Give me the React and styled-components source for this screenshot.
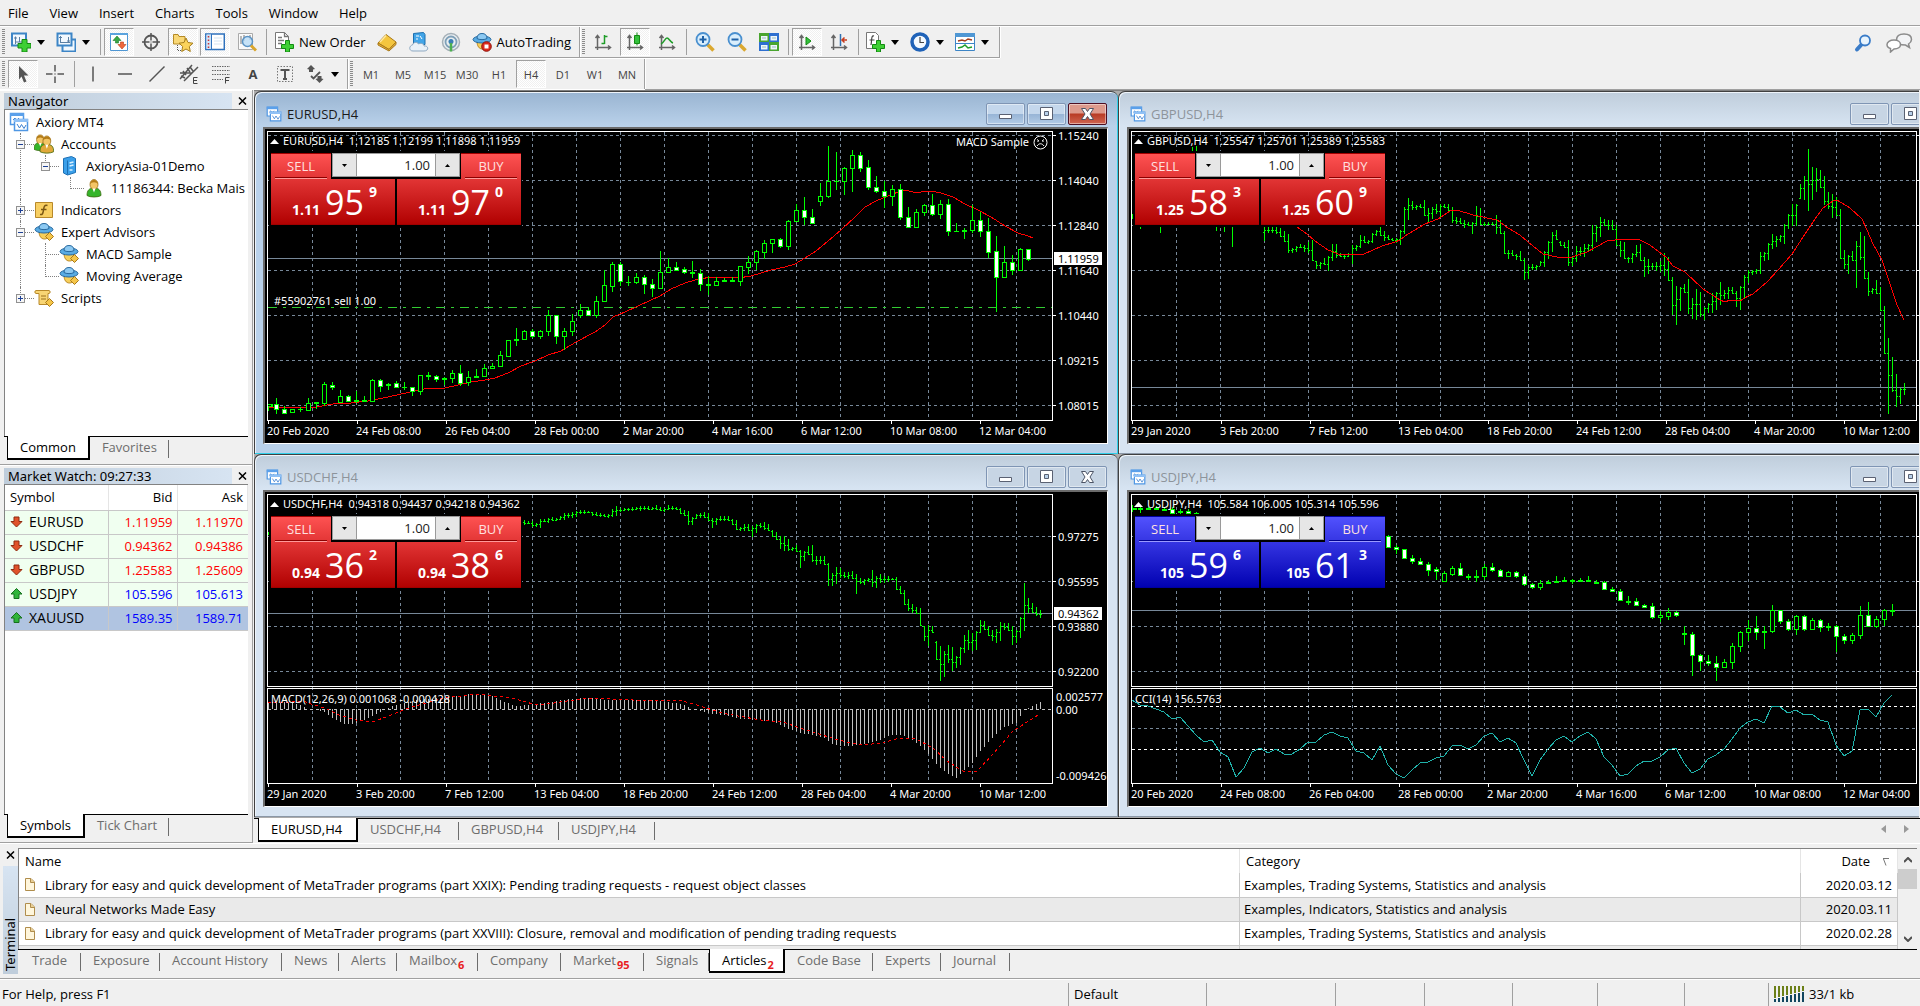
import React, { useState } from 'react'
import styled, { createGlobalStyle } from 'styled-components'

const UI_FONT = '"Open Sans", "Noto Sans", sans-serif'
const CHART_FONT = '"Noto Sans", "Open Sans", sans-serif'

const GlobalStyle = createGlobalStyle`
* { box-sizing: border-box; }
body {
  margin: 0;
  background: #f0f0f0;
  color: #000;
  font-family: ${UI_FONT};
  font-size: 13px;
  overflow: hidden;
}
button, input {
  font: inherit;
  color: inherit;
  padding: 0;
  margin: 0;
  border: 0;
  border-radius: 0;
  background: none;
}
ul { list-style: none; margin: 0; padding: 0; }
svg { display: block; flex: none; }
`

/* ---------- page ---------- */

const Terminal = styled.div`
  display: flex;
  flex-direction: column;
  width: 100%;
  height: 100vh;
`
const MenuBar = styled.nav`
  display: flex;
  height: 27px;
  padding: 0 0 2px 8px;
  gap: 21px;
  align-items: center;
  background: linear-gradient(#f0f0f0 25px, #a0a0a0 25px, #a0a0a0 26px, #fff 26px);
`
const ToolRow = styled.div`
  display: flex;
  height: ${(props) => (props.$last ? '31px' : '32px')};
  border-bottom: ${(props) => (props.$last ? '1px solid #a0a0a0' : '0')};
`
const ToolBar = styled.div`
  display: flex;
  align-items: center;
  height: ${(props) => (props.$flat ? '30px' : '31px')};
  padding-right: ${(props) => (props.$flat ? '0' : '2px')};
  border-right: 1px solid #a0a0a0;
  border-bottom: ${(props) => (props.$flat ? '0' : '1px solid #a0a0a0')};
  box-shadow: 1px 0 0 #fff, 0 1px 0 #fff;
`
const Grip = styled.span`
  width: 3px;
  height: 26px;
  margin: 0 3px 0 2px;
  background: repeating-linear-gradient(#8c8c8c 0 1px, #f0f0f0 1px 2px);
`
const Divider = styled.span`
  width: 1px;
  height: 26px;
  margin: 0 3px 0 2px;
  background: #a0a0a0;
`
const hatch = 'repeating-conic-gradient(#fff 0 25%, #f0f0f0 0 50%) 0 0 / 2px 2px'
const ToolButton = styled.button`
  display: flex;
  align-items: center;
  justify-content: ${(props) => (props.$wide ? 'flex-start' : 'center')};
  gap: ${(props) => (props.$wide ? '6px' : '5px')};
  width: ${(props) => (props.$text ? 'auto' : props.$wide ? '45px' : '30px')};
  height: 28px;
  padding: ${(props) => (props.$wide ? '0 0 0 2px' : props.$text ? '0 3px' : '0')};
  margin-right: ${(props) => (props.$wide ? '0' : '2px')};
  border: 1px solid transparent;
  border-color: ${(props) => (props.$on ? '#a0a0a0 #fff #fff #a0a0a0' : 'transparent')};
  background: ${(props) => (props.$on ? hatch : 'none')};
  font-size: ${(props) => (props.$period ? '11px' : '13px')};
  color: ${(props) => (props.$period ? '#444' : '#000')};
  white-space: nowrap;
  & > b { font-size: 13px; }
`
const Corner = styled.div`
  display: flex;
  align-items: center;
  gap: 13px;
  margin-left: auto;
  padding-right: 7px;
`
const Main = styled.div`
  display: flex;
  flex: 1;
  min-height: 0;
`

/* ---------- docked panels ---------- */

const Dock = styled.aside`
  display: flex;
  flex-direction: column;
  flex: none;
  width: 253px;
  border-right: 1px solid #a0a0a0;
`
const Panel = styled.section`
  display: flex;
  flex-direction: column;
  flex: ${(props) => (props.$grow ? '1' : '0 0 375px')};
  min-height: 0;
  padding: 3px 4px 2px 4px;
  border-bottom: 1px solid #a0a0a0;
  box-shadow: inset 0 1px 0 #fff;
`
const PanelHead = styled.header`
  display: flex;
  flex: none;
  align-items: center;
  height: 16px;
  padding-right: 1px;
  & > h2 {
    flex: 1;
    margin: 0 6px 0 0;
    padding-left: 4px;
    font: 400 13px/16px ${CHART_FONT};
    background: linear-gradient(90deg, #bfcddb, #d7e4f2);
  }
`
const PanelBody = styled.div`
  flex: 1;
  min-height: 0;
  overflow: hidden;
  background: #fff;
  border: solid #828282;
  border-width: 1px 0 0 1px;
`
const TabStrip = styled.div`
  display: flex;
  flex: none;
  height: ${(props) => props.$h || 26}px;
  padding-left: ${(props) => props.$indent || 3}px;
  background: linear-gradient(#000 1px, transparent 1px);
`
const Tab = styled.button`
  display: flex;
  flex: none;
  height: ${(props) => (props.$on ? '24px' : '22px')};
  width: ${(props) => (props.$w ? props.$w + 'px' : 'auto')};
  padding: ${(props) => (props.$w ? '0 0 0 12px' : '0 12px')};
  white-space: nowrap;
  line-height: 22px;
  color: ${(props) => (props.$on ? '#000' : '#6d6d6d')};
  background: ${(props) => (props.$on ? '#fff' : 'linear-gradient(#6d6d6d, #6d6d6d) 100% 4px / 1px 18px no-repeat')};
  border: solid #000;
  border-width: ${(props) => (props.$on ? '0 2px 2px 1px' : '0')};
  & > sup {
    margin-left: 1px;
    padding-top: 9px;
    font-size: 11px;
    font-weight: 700;
    line-height: 14px;
    color: #e81c23;
  }
`

const Row = styled.div`
  display: flex;
  align-items: center;
  gap: 7px;
  height: 22px;
  white-space: nowrap;
`
const Branch = styled.ul`
  margin-left: ${(props) => (props.$root ? '4px' : '25px')};
  padding-top: ${(props) => (props.$root ? '1px' : '0')};
`
const Leaf = styled.li`
  position: relative;
  &:before {
    display: ${(props) => (props.$root ? 'none' : 'block')};
    content: "";
    position: absolute;
    left: -14px;
    top: 0;
    width: 13px;
    height: 11px;
    border-left: 1px dotted #808080;
    border-bottom: 1px dotted #808080;
  }
  &:not(:last-child):after {
    display: ${(props) => (props.$root ? 'none' : 'block')};
    content: "";
    position: absolute;
    left: -14px;
    top: 11px;
    bottom: 0;
    border-left: 1px dotted #808080;
  }
`
const Expander = styled.button`
  position: absolute;
  z-index: 1;
  left: -18px;
  top: 7px;
  width: 9px;
  height: 9px;
  border: 1px solid #919191;
  background:
    linear-gradient(#1c3f94, #1c3f94) center / 5px 1px no-repeat,
    linear-gradient(#1c3f94, #1c3f94) center / ${(props) => (props.$open ? '0 0' : '1px 5px')} no-repeat,
    #f6f6f6;
`

const QuoteTable = styled.table`
  width: 243px;
  table-layout: fixed;
  border-collapse: collapse;
  th, td {
    height: 24px;
    padding: 0 4px 1px;
    text-align: right;
    font-weight: 400;
    border-right: 1px solid #c8c8c8;
    border-bottom: 1px solid #c8c8c8;
  }
  th { height: 25px; border-right-color: #e5e5e5; }
  th:first-child, td:first-child { width: 103px; text-align: left; padding-left: 5px; }
  th:nth-child(2) { width: 69px; }
  td:last-child { border-right-color: transparent; }
`
const QuoteRow = styled.tr`
  background: ${(props) => (props.$selected ? '#b0c4e1' : '#f0fff0')};
  & > td { color: ${(props) => (props.$up ? '#00f' : '#f00')}; }
  & > td:first-child { color: #000; font-size: 14px; }
`
const Cell = styled.span`
  display: flex;
  align-items: center;
  gap: ${(props) => props.$gap || 6}px;
`

/* ---------- chart windows ---------- */

const Workspace = styled.div`
  display: flex;
  flex-direction: column;
  flex: 1;
  min-width: 0;
  margin: 0 1px 0 1px;
`
const Desktop = styled.div`
  display: grid;
  grid-template-columns: repeat(2, 864px);
  align-content: start;
  flex: 1;
  overflow: hidden;
  border-top: 1px solid #808080;
  background: #ababab;
`
const ChartWindow = styled.article`
  height: 363px;
  padding: 0 0 0 8px;
  border: solid #404040;
  border-width: 1px 0 0 1px;
  border-radius: 7px 7px 0 0;
  background: ${(props) =>
    props.$active ? 'linear-gradient(#99b4d1, #b9d1ea 34px)' : 'linear-gradient(#bfcddb, #d7e4f2 34px)'};
  box-shadow: inset -1px -1px 0 ${(props) => (props.$active ? '#2fd0ea' : '#8a97a6')}, inset 1px 1px 0 #eef4fa;
`
const TitleBar = styled.header`
  display: flex;
  align-items: center;
  height: 35px;
  padding: 8px 11px 0 3px;
  & > h3 {
    flex: 1;
    margin: 0 0 0 5px;
    font-size: 13px;
    font-weight: 400;
    line-height: 20px;
    color: ${(props) => (props.$active ? '#1a1a1a' : '#8d949b')};
  }
`
const Caption = styled.button`
  display: flex;
  align-items: center;
  justify-content: center;
  width: 39px;
  height: 22px;
  margin-left: 2px;
  border: 1px solid ${(props) => (props.$close ? '#4d0e22' : '#7f95b4')};
  border-radius: 2px;
  background: ${(props) =>
    props.$close
      ? 'linear-gradient(#dd9a8c 45%, #b83b24 50%, #d06652)'
      : props.$active
        ? 'linear-gradient(#c4d7ec 48%, #98b5d6 52%, #b2cbe6)'
        : '#c7d5e4'};
  box-shadow: inset 0 0 0 1px rgba(255, 255, 255, .45);
`
const Client = styled.div`
  position: relative;
  width: 845px;
  height: 317px;
  border: solid;
  border-width: 2px 1px 1px 2px;
  border-color: #6b6b6b #fff #fff #6b6b6b;
  background: #000;
`
const Ohlc = styled.p`
  position: absolute;
  left: 5px;
  top: 4px;
  display: flex;
  align-items: center;
  gap: 4px;
  margin: 0;
  color: #fff;
  white-space: pre;
  font: 11px/16px ${CHART_FONT};
`
const Expert = styled(Ohlc)`
  left: auto;
  right: 59px;
  top: 5px;
`

/* one click trading */

const tones = {
  red: { top: '#ff5353', mid: '#e23535', low: '#b00000', edge: '#a00000', line: '#8c0000', glow: '#ff9a9a' },
  blue: { top: '#5353ff', mid: '#3535e2', low: '#0000b0', edge: '#0000a0', line: '#00008c', glow: '#9a9aff' },
}
const TradeBox = styled.div`
  position: absolute;
  left: 4px;
  top: 22px;
  display: grid;
  grid-template-columns: 60px 1px 63px 2px 63px 1px 60px;
  grid-template-rows: 26px 46px;
  width: 253px;
  height: 76px;
  padding: 2px 1px 2px 2px;
  background: #000;
  color: #fff;
`
const Side = styled.button`
  grid-row: 1;
  grid-column: ${(props) => (props.$buy ? 7 : 1)};
  font-size: 13px;
  color: #ffe0e0;
  background:
    linear-gradient(${(props) => props.$tone.line}, ${(props) => props.$tone.line}) 50% 24px / 52px 1px no-repeat,
    linear-gradient(${(props) => props.$tone.glow}, ${(props) => props.$tone.glow}) 50% 25px / 52px 1px no-repeat,
    linear-gradient(${(props) => props.$tone.top}, ${(props) => props.$tone.mid});
  box-shadow: inset 0 1px 0 ${(props) => props.$tone.edge};
`
const Quote = styled.button`
  grid-row: 2;
  grid-column: ${(props) => (props.$buy ? '5 / 8' : '1 / 4')};
  display: flex;
  align-items: flex-end;
  justify-content: flex-end;
  gap: 5px;
  padding: 0 18px 5px 0;
  font-size: 14px;
  font-weight: 700;
  line-height: 20px;
  background: linear-gradient(${(props) => props.$tone.mid}, ${(props) => props.$tone.low});
  box-shadow: inset 0 -1px 0 ${(props) => props.$tone.edge};
  & > b { font-size: 34px; font-weight: 400; line-height: 36px; }
  & > i { font-style: normal; align-self: flex-start; padding-top: 3px; }
`
const Volume = styled.div`
  grid-row: 1;
  grid-column: 2 / 7;
  display: flex;
  height: 24px;
  margin: 0 1px;
  border: 1px solid #9a9a9a;
  background: #fff;
  color: #222;
  & > button { width: 23px; background: #e6e6e6; }
  & > button > svg { margin: 0 auto; }
  & > input {
    flex: 1;
    width: 40px;
    padding: 0 5px 0 0;
    border: solid #9a9a9a;
    border-width: 0 1px;
    text-align: right;
    font-size: 13px;
  }
`
const DeskTabs = styled(TabStrip)`
  margin-right: -1px;
  padding-left: 4px;
`
const Arrows = styled.span`
  display: flex;
  align-items: center;
  gap: 18px;
  margin-left: auto;
  padding: 0 11px 4px 0;
`

/* ---------- toolbox ---------- */

const Toolbox = styled.section`
  display: flex;
  flex: none;
  height: 135px;
  padding: 5px 3px 4px 2px;
  box-shadow: inset 0 1px 0 #fff;
`
const Spine = styled.header`
  display: flex;
  flex-direction: column;
  align-items: center;
  width: 16px;
  padding-top: 3px;
  & > h2 {
    flex: 1;
    width: 15px;
    margin: 7px 0 0;
    padding-top: 3px;
    writing-mode: vertical-rl;
    transform: rotate(180deg);
    font: 400 13px/15px ${CHART_FONT};
    background: linear-gradient(#bfcddb, #d7e4f2);
  }
`
const ToolboxBody = styled.div`
  display: flex;
  flex-direction: column;
  flex: 1;
  min-width: 0;
`
const ListArea = styled.div`
  display: flex;
  height: 101px;
  overflow: hidden;
  background: #fff;
  border-top: 1px solid #828282;
  border-left: 1px solid #828282;
`
const Articles = styled.table`
  flex: 1;
  table-layout: fixed;
  border-collapse: collapse;
  th, td {
    height: 24px;
    padding: 0 5px 0 4px;
    text-align: left;
    font-weight: 400;
    line-height: 20px;
    border-right: 1px solid #c8c8c8;
    border-bottom: 1px solid #c8c8c8;
  }
  th { border-bottom: 0; border-right-color: #e5e5e5; padding-left: 6px; }
  td:first-child { padding-left: 6px; }
  th:nth-child(2) { width: 561px; }
  th:nth-child(3) { width: 97px; }
  th:last-child, td:last-child { text-align: right; }
  tbody tr:nth-child(even) { background: #eaeaea; }
`
const SortMark = styled.svg`
  display: inline-block;
  margin: 0 3px 0 13px;
`
const ScrollBar = styled.div`
  display: flex;
  flex-direction: column;
  align-items: center;
  width: 19px;
  padding: 8px 0 7px;
  background: #f0f0f0;
`
const Thumb = styled.span`
  width: 19px;
  height: 20px;
  margin: 6px 0 auto;
  background: #cdcdcd;
`
const StatusBar = styled.footer`
  display: flex;
  flex: none;
  height: 28px;
  padding-top: 4px;
  border-top: 1px solid #a0a0a0;
  box-shadow: inset 0 1px 0 #fff;
`
const StatusCell = styled.span`
  display: flex;
  align-items: center;
  gap: 5px;
  width: ${(props) => (props.$w ? props.$w + 'px' : 'auto')};
  flex: ${(props) => (props.$w ? 'none' : '1')};
  padding: 0 0 1px ${(props) => (props.$w ? '5px' : '2px')};
  border-left: ${(props) => (props.$w ? '1px solid #a0a0a0' : '0')};
  white-space: nowrap;
`

/* ---------- icons ---------- */

const axes = <path d="M4.500 18V4M2.500 6l2-2.500 2 2.500M2 15.500h15M15 13.500l2.500 2-2.500 2" fill="none" stroke="#666" strokeWidth="1.500" />
const plus = <path d="M11.500 8.500h4v4h4v4h-4v3.500h-4v-3.500h-4v-4h4z" fill="#3ecf34" stroke="#128a12" />
const gem = <path d="M15.500 10.500l4 4-4 4-4-4z" fill="#f5c64a" stroke="#a9791a" />
const hat = (
  <>
    <path d="M5 9c0 5 2 8 5.500 8s5-3 5-7z" fill="#f7cf5a" stroke="#b98620" />
    <ellipse cx="10" cy="7.500" rx="9" ry="3.500" fill="#59abe3" stroke="#27699f" />
    <path d="M5 6.500C5 3 7 1.500 10 1.500s5 1.500 5 5c-2 1.500-8 1.500-10 0z" fill="#8cc9f2" stroke="#27699f" />
  </>
)
const head = (x, y, s, coat) => (
  <g transform={`translate(${x} ${y}) scale(${s})`}>
    <path d="M1 17c0-5 2-7.500 7-7.500s7 2.500 7 7.500c-3 2-11 2-14 0z" fill={coat} stroke="#3c6a10" strokeWidth=".8" />
    <ellipse cx="8" cy="6" rx="4" ry="5" fill="#f3c566" stroke="#9c701a" strokeWidth=".8" />
    <path d="M4 6c0-6 8-6 8 0-1-3-7-3-8 0z" fill="#b47c17" />
    <path d="M6.500 10l1.500 4 1.500-4z" fill="#fff" />
  </g>
)
const shapes = {
  newChart: (
    <>
      <path d="M1 1.500h14v12H1z" fill="#f2f8fe" stroke="#3d85c6" strokeWidth="2" />
      <path d="M4.500 12V4.500M3 6h3M8.500 10V5M4 10h8" stroke="#5b7fa3" fill="none" />
      <path d="M11 7.500h5v4h4v4.500h-4v4h-5v-4H7v-4.500h4z" fill="#3ecf34" stroke="#128a12" />
    </>
  ),
  profiles: (
    <>
      <path d="M6.500 7.500h13v12h-13z" fill="#f2f8fe" stroke="#3d85c6" strokeWidth="2" />
      <path d="M1.500 1.500h14v12h-14z" fill="#f2f8fe" stroke="#3d85c6" strokeWidth="2" />
      <path d="M4.500 11V4M3 5.500h3M12.500 11V5M11 9h3M4 10.500h10" stroke="#5b7fa3" fill="none" />
    </>
  ),
  market: (
    <>
      <path d="M1.500 1.500h17v17h-17z" fill="#fff" stroke="#4f97d4" />
      <path d="M1 1h18v2H1z" fill="#5ba4de" />
      <path d="M8 4l4 4.500H9.500V11h-3V8.500H4z" fill="#39a845" stroke="#1e7a2b" strokeWidth=".6" />
      <path d="M13 17l4-4.500h-2.500V10h-3v2.500H9z" fill="#f0683c" stroke="#bb3d16" strokeWidth=".6" />
    </>
  ),
  cross: (
    <>
      <circle cx="10" cy="10" r="6.500" fill="none" stroke="#555" strokeWidth="1.800" />
      <path d="M10 1v18M1 10h18" stroke="#555" strokeWidth="1.500" />
      <path d="M10 8v4M8 10h4" stroke="#f0f0f0" />
    </>
  ),
  navigator: (
    <>
      <path d="M.5 2.500h4.500l1 2h6v7.500H.5z" fill="#f9d877" stroke="#b58a26" />
      <path d="M4.500 13v6M5 18.500h4" stroke="#555" strokeDasharray="1 1" fill="none" />
      <path d="M13 6l2 4.500 5 .7-3.700 3.300 1 5L13 17l-4.300 2.500 1-5L6 11.200l5-.7z" fill="#fbd35b" stroke="#a8801d" />
    </>
  ),
  terminal: (
    <>
      <path d="M.8 2h18.500v15.500H.8z" fill="#fff" stroke="#2f72bd" strokeWidth="1.500" />
      <path d="M1.500 2.500H6v14.500H1.500z" fill="#cfe3f7" />
      <path d="M3.500 4v12" stroke="#c33" strokeDasharray="1.500 2" strokeWidth="1.500" />
      <path d="M6.500 2v16" stroke="#2f72bd" />
      <path d="M9 6h8M9 9h8M9 12h8" stroke="#d5e4f2" />
    </>
  ),
  tester: (
    <>
      <path d="M1.500 1.500h14v16h-14z" fill="#fafafa" stroke="#aaa" />
      <path d="M4 4v8M7 3v6M13 3v5" stroke="#777" />
      <circle cx="10.500" cy="9.500" r="5" fill="#b9dcf6" fillOpacity=".8" stroke="#5b93c4" strokeWidth="1.500" />
      <path d="M14 13.500l5 5" stroke="#d9a52b" strokeWidth="3" />
    </>
  ),
  order: (
    <>
      <path d="M1.500.500h9l4 4v12h-13z" fill="#fff" stroke="#777" />
      <path d="M10.500.500v4h4M4 5.500h4M4 8.500h6M4 11.500h4" stroke="#777" fill="none" strokeWidth="1.300" />
      {plus}
    </>
  ),
  book: (
    <>
      <path d="M1 11l8-8.500 10 7.500-7 7.500z" fill="#f4c63f" stroke="#a9791a" />
      <path d="M1 11v2l11 6 7-6.500V10l-7 7.500z" fill="#e8b43a" stroke="#a9791a" />
      <path d="M9 3.500L3 10" stroke="#ffe9a0" strokeWidth="1.500" />
    </>
  ),
  cloud: (
    <>
      <path d="M4.500 1.500l10-1 1.500 2v10H4.500z" fill="#42a5e8" stroke="#1d6fae" />
      <path d="M7 4h3M11 4l2 3M7 7h2" stroke="#fff" />
      <path d="M4 19c-4.500 0-4-5.500-.5-6 .5-3 5-3.500 6-1 3-1.500 5.500 0 5.500 2 5-.5 5 5 0 5z" fill="#e9f1f8" stroke="#8fa9c2" />
    </>
  ),
  radio: (
    <>
      <circle cx="10" cy="10" r="8.500" fill="#e9edf0" stroke="#a5b0b8" strokeWidth="1.500" />
      <circle cx="10" cy="10" r="5.500" fill="none" stroke="#7fa0b8" strokeWidth="1.800" />
      <circle cx="10" cy="9.500" r="2.500" fill="#3b7fb4" />
      <path d="M10 11v8.500" stroke="#4cb04f" strokeWidth="2.500" />
    </>
  ),
  auto: (
    <>
      {hat}
      <circle cx="14.500" cy="14.500" r="4.800" fill="#db2a1c" stroke="#8e130a" />
      <path d="M12.500 12.500h4v4h-4z" fill="#fff" />
    </>
  ),
  bars: (
    <>
      {axes}
      <path d="M11.500 3v9M11.500 4.500h3M8.500 11.500h3" stroke="#1f9d28" strokeWidth="1.500" fill="none" />
    </>
  ),
  candle: (
    <>
      {axes}
      <path d="M12 .5v13" stroke="#128a12" />
      <path d="M9.500 3.500h5v8h-5z" fill="#34c13c" stroke="#128a12" />
    </>
  ),
  line: (
    <>
      {axes}
      <path d="M4 12c3-1 4-6 6-6s3 4 6 5" stroke="#1f9d28" strokeWidth="1.500" fill="none" />
    </>
  ),
  zoomIn: (
    <>
      <path d="M12 12l6.500 6.500" stroke="#dba82f" strokeWidth="3.500" />
      <circle cx="8" cy="7.500" r="6.500" fill="#d9eefc" stroke="#4a90cf" strokeWidth="1.800" />
      <path d="M4.500 7.500h7M8 4v7" stroke="#1f62a8" strokeWidth="2" />
    </>
  ),
  zoomOut: (
    <>
      <path d="M12 12l6.500 6.500" stroke="#dba82f" strokeWidth="3.500" />
      <circle cx="8" cy="7.500" r="6.500" fill="#d9eefc" stroke="#4a90cf" strokeWidth="1.800" />
      <path d="M4.500 7.500h7" stroke="#1f62a8" strokeWidth="2" />
    </>
  ),
  tiles: (
    <>
      <path d="M0 1h10v9H0zM10 10h10v9H10z" fill="#4aa52f" />
      <path d="M10 1h10v9H10zM0 10h10v9H0z" fill="#2e6fd0" />
      <path d="M2 4h6.500v4.500H2zM11.500 4H18v4.500h-6.500zM2 13h6.500v4.500H2zM11.500 13H18v4.500h-6.500z" fill="#eef6fb" />
      <path d="M3 6h4M13 6h4M3 15h4M13 15h4" stroke="#9bb" />
    </>
  ),
  scroll: (
    <>
      {axes}
      <path d="M9 5l5 4-5 4z" fill="#34c13c" stroke="#128a12" />
    </>
  ),
  shift: (
    <>
      {axes}
      <path d="M11.500 2v12" stroke="#2f6fb0" strokeWidth="1.500" />
      <path d="M18 8h-5M15.500 5.500L13 8l2.500 2.500" stroke="#c63a1c" strokeWidth="1.500" fill="none" />
    </>
  ),
  indicators: (
    <>
      <path d="M1.500.500h9l3 3v13h-12z" fill="#fff" stroke="#777" />
      <path d="M9 4C6 3 7 8 6 13M4.500 8h5" stroke="#444" fill="none" strokeWidth="1.200" />
      {plus}
    </>
  ),
  clock: (
    <>
      <circle cx="10" cy="10" r="8" fill="#f3f9ff" stroke="#1f62b8" strokeWidth="3.500" />
      <path d="M10 5v5.500h4" stroke="#444" fill="none" strokeWidth="1.200" />
    </>
  ),
  template: (
    <>
      <path d="M.5 1.500h19v17H.5z" fill="#fff" stroke="#3d85c6" />
      <path d="M0 1h20v4H0z" fill="#4f97d4" />
      <path d="M3 9l4-1 3 1 3-2 4 1" stroke="#a33b1b" strokeWidth="1.500" fill="none" />
      <path d="M0 11.500h20" stroke="#3d85c6" />
      <path d="M3 16l4-1 3-2 3 3 4-1" stroke="#1f9d28" strokeWidth="1.500" fill="none" />
    </>
  ),
  pointer: <path d="M6 2l9.500 9.500H11l2.500 6-2.500 1-2.500-6L6 15.500z" fill="#555" />,
  crosshair: <path d="M10 1v6.500M10 12.500V19M1 10h6.500M12.500 10H19M10 9.500v1" stroke="#555" strokeWidth="1.500" />,
  vline: <path d="M10 2.500v15" stroke="#555" strokeWidth="1.500" />,
  hline: <path d="M3 10h14" stroke="#555" strokeWidth="1.500" />,
  trend: <path d="M2.500 17.500l15-15" stroke="#555" strokeWidth="1.500" />,
  channel: (
    <>
      <path d="M1 15L13 1M5 17L19 3M4 7l3 4M8 4l3 4M2 12l4 2M11 3l3 4M1 9h12" stroke="#555" strokeWidth="1.500" />
      <path d="M18.500 13.500h-4v6h4M14.500 16.500h3.500" stroke="#444" fill="none" />
    </>
  ),
  fibo: (
    <>
      <path d="M1 2.500h18M1 6.500h18M1 10.500h18M1 15.500h11" stroke="#666" strokeDasharray="1.500 1" />
      <path d="M18.500 13.500h-4v6M14.500 16.500h3.500" stroke="#444" fill="none" />
    </>
  ),
  label: (
    <>
      <path d="M2.500 2.500h15v15h-15z" fill="none" stroke="#777" strokeDasharray="1.500 1.500" />
      <path d="M5.500 6h9M10 6v9M8 15h4" stroke="#555" strokeWidth="2" fill="none" />
    </>
  ),
  arrows: (
    <>
      <path d="M6 1l4 4-2 .5V8H4V5.500L2 5z" fill="#555" />
      <path d="M14.500 19l-4-4 2-.5V12h4v2.500l2 .5z" fill="#555" />
      <path d="M6 12l2.500 2.500L15 8" fill="none" stroke="#555" strokeWidth="1.800" />
    </>
  ),
  chartWin: (
    <>
      <path d="M1.500 1.500h13v11h-13z" fill="#fff" stroke="#4f97e4" strokeWidth="1.500" />
      <path d="M1 1h14v3H1z" fill="#5ba0ea" />
      <path d="M4 8l2-2 1.500 3L10 6" stroke="#3b7fd0" fill="none" />
      <path d="M5.500 7.500h13v11h-13z" fill="#fff" stroke="#4f97e4" strokeWidth="1.500" />
      <path d="M5 7h14v3H5z" fill="#8fc0f5" />
      <path d="M8 12l2.500 4 2-3.500 2.500 4L17 13" stroke="#3b7fd0" fill="none" />
    </>
  ),
  accounts: (
    <>
      {head(-1, 0, 0.9, '#35b52b')}
      {head(5, 1, 0.98, '#e0a83a')}
    </>
  ),
  server: (
    <>
      <path d="M4.500 2.500l8-2 4 2v14l-8 2.500-4-2z" fill="#3ba0ea" stroke="#1c6fb4" />
      <path d="M8.500 4.500v14" stroke="#1c6fb4" />
      <path d="M10.500 7l4-1M10.500 10l4-1M10.500 14h3" stroke="#d9f0ff" strokeWidth="1.500" />
    </>
  ),
  user: head(2, 0.5, 1, '#35b52b'),
  func: (
    <>
      <path d="M1.500 2.500h17v15h-17z" fill="#f8cf62" stroke="#b8892a" />
      <path d="M13.500 5.500c-3-1-3.500 1-4 4.500s-1 5-3.500 4.500M7 9.500h5.500" stroke="#7a5714" fill="none" strokeWidth="1.500" />
    </>
  ),
  advisor: (
    <>
      {hat}
      {gem}
    </>
  ),
  script: (
    <>
      <path d="M2 2.500h13c1.500 0 1.500 3 0 3h-1v11h-9v-11H2c-1.500 0-1.500-3 0-3z" fill="#f8d574" stroke="#b8892a" />
      <path d="M7 8h5M7 11h5" stroke="#9c701a" />
      {gem}
    </>
  ),
  search: (
    <>
      <path d="M9 11L4 16.500" stroke="#3a7cc8" strokeWidth="4" strokeLinecap="round" />
      <circle cx="12" cy="7.500" r="5" fill="#e8f4fd" stroke="#3a7cc8" strokeWidth="1.800" />
    </>
  ),
}
function Icon({ name, size = 20 }) {
  return (
    <svg width={size} height={size} viewBox="0 0 20 20" aria-hidden="true">
      {shapes[name]}
    </svg>
  )
}
const Caret = () => (
  <svg width="8" height="5" viewBox="0 0 8 5"><path d="M0 0h8L4 5z" fill="#000" /></svg>
)
const Cross = () => (
  <svg width="9" height="8" viewBox="0 0 9 8"><path d="M1 .5l7 7M8 .5l-7 7" stroke="#000" strokeWidth="1.500" /></svg>
)
const Chats = () => (
  <svg width="27" height="20" viewBox="0 0 27 20">
    <path d="M18 1c5 0 7.500 2.500 7.500 5.500 0 2-1.500 3.500-3 4.500l1 3.500-4-2.500c-6 0-9-1.500-9-5S13 1 18 1z" fill="#f3f4f6" stroke="#8b8b8b" strokeWidth="1.500" />
    <path d="M8 7c4 0 6.500 2 6.500 4.500S12 16 8 16l-3.500 3V15.500C2.500 15 1 13.500 1 11.500 1 9 4 7 8 7z" fill="#fff" stroke="#8b8b8b" strokeWidth="1.500" />
  </svg>
)
const Direction = ({ up }) => (
  <svg width="13" height="13" viewBox="0 0 13 13">
    {up ? (
      <path d="M6.500 1.500L12 7H9v4.500H4V7H1z" fill="#2fb43a" stroke="#16701e" />
    ) : (
      <path d="M6.500 12L12 6.500H9V2H4v4.500H1z" fill="#e0522a" stroke="#8f2b10" />
    )}
  </svg>
)
const Page = () => (
  <svg width="10" height="13" viewBox="0 0 10 13">
    <path d="M.5.500h5.500l3.500 3.500v8.500H.5z" fill="#fff6dc" stroke="#b08d4c" />
    <path d="M5.500.500v4h4" fill="#e9cf94" stroke="#b08d4c" />
  </svg>
)
const Traffic = () => (
  <svg width="30" height="16" viewBox="0 0 30 16" shapeRendering="crispEdges">
    {[0, 1, 2, 3, 4, 5, 6, 7].map((i) => (
      <g key={i}>
        <rect x={i * 4} y="0" width="2" height={12 - i} fill="#6b7f17" />
        <rect x={i * 4} y={13 - i} width="2" height={3 + i} fill="#12465f" />
      </g>
    ))}
  </svg>
)

/* ---------- chart data ---------- */

// candles: high, body top, body bottom, low, 1 when the body is filled
const eurusd = [
  [942, 943, 950, 965, 0], [924, 942, 958, 972, 1], [950, 957, 969, 970, 1], [957, 958, 968, 968, 0], [953, 957, 959, 966, 0],
  [926, 939, 960, 962, 0], [936, 937, 940, 957, 0], [876, 884, 941, 949, 0], [878, 885, 893, 900, 1], [900, 918, 938, 940, 0],
  [915, 918, 935, 938, 1], [904, 931, 935, 940, 0], [918, 932, 935, 936, 0], [867, 870, 935, 935, 0], [867, 870, 890, 906, 1],
  [881, 883, 886, 900, 0], [873, 881, 893, 894, 1], [876, 891, 893, 900, 0], [891, 891, 904, 918, 1], [856, 856, 905, 915, 0],
  [846, 855, 858, 870, 0], [855, 858, 868, 876, 1], [861, 865, 868, 886, 0], [840, 849, 866, 880, 0], [825, 849, 879, 888, 1],
  [843, 862, 877, 890, 0], [837, 859, 863, 865, 0], [823, 835, 860, 862, 0], [819, 828, 835, 836, 0], [783, 796, 830, 833, 0],
  [750, 750, 800, 803, 0], [716, 747, 751, 768, 0], [720, 723, 749, 752, 0], [717, 723, 740, 744, 1], [720, 724, 740, 747, 0],
  [662, 676, 723, 738, 0], [675, 676, 740, 762, 1], [714, 724, 740, 782, 0], [673, 693, 724, 738, 0], [642, 660, 676, 684, 0],
  [652, 660, 677, 679, 1], [618, 633, 677, 684, 0], [540, 585, 635, 638, 0], [516, 522, 590, 606, 0], [516, 522, 575, 588, 1],
  [558, 576, 578, 590, 0], [549, 562, 578, 582, 0], [555, 561, 584, 614, 1], [567, 582, 594, 621, 1], [483, 547, 594, 597, 0],
  [504, 531, 548, 550, 0], [516, 531, 540, 542, 1], [531, 537, 548, 552, 1], [514, 547, 551, 566, 0], [537, 549, 584, 603, 1],
  [560, 583, 586, 617, 0], [563, 573, 587, 588, 0], [565, 571, 574, 578, 0], [561, 571, 574, 576, 0], [528, 528, 575, 590, 0],
  [498, 516, 531, 552, 0], [480, 484, 518, 540, 0], [450, 459, 486, 508, 0], [447, 448, 461, 489, 0], [444, 448, 470, 474, 1],
  [390, 393, 470, 480, 0], [342, 360, 395, 396, 0], [323, 360, 383, 405, 1], [357, 382, 401, 403, 1], [279, 319, 335, 350, 0],
  [168, 273, 320, 326, 0], [188, 273, 275, 300, 0], [231, 234, 275, 315, 0], [180, 195, 236, 306, 0], [186, 195, 236, 246, 1],
  [210, 231, 293, 302, 1], [258, 291, 304, 309, 1], [273, 303, 320, 354, 1], [285, 297, 320, 348, 0], [282, 297, 383, 392, 1],
  [351, 382, 411, 416, 1], [357, 367, 411, 416, 0], [342, 346, 368, 378, 0], [312, 346, 374, 378, 1], [330, 343, 374, 387, 0],
  [327, 343, 425, 438, 1], [399, 423, 425, 427, 0], [414, 421, 423, 447, 0], [345, 391, 422, 430, 0], [366, 391, 425, 441, 1],
  [384, 424, 486, 504, 1], [438, 484, 563, 666, 1], [468, 516, 563, 564, 0], [495, 516, 540, 555, 1], [474, 478, 540, 542, 0],
  [478, 478, 507, 513, 1],
]
const usdjpyHead = [
  [165, 175, 177, 188, 0], [165, 175, 177, 190, 0], [172, 174, 178, 178, 0], [170, 174, 178, 178, 0], [173, 177, 180, 180, 0],
  [172, 178, 190, 190, 1], [178, 184, 188, 192, 1], [178, 184, 190, 192, 1], [188, 189, 191, 191, 0],
]
const usdjpy = [
  [255, 258, 292, 294, 1], [285, 292, 298, 312, 1], [297, 298, 326, 328, 1], [315, 325, 333, 343, 1], [324, 335, 343, 345, 1],
  [336, 343, 360, 380, 1], [352, 359, 364, 392, 1], [364, 370, 395, 398, 0], [348, 355, 374, 378, 0], [340, 355, 377, 380, 1],
  [374, 378, 382, 390, 1], [360, 380, 382, 398, 0], [342, 352, 380, 392, 0], [340, 352, 360, 368, 1], [358, 360, 380, 383, 1],
  [363, 367, 380, 382, 0], [363, 367, 380, 385, 1], [373, 380, 402, 410, 1], [400, 402, 412, 418, 1], [392, 400, 412, 422, 0],
  [390, 397, 401, 404, 0], [380, 395, 398, 400, 0], [382, 391, 394, 396, 0], [388, 391, 394, 404, 0], [386, 392, 394, 398, 0],
  [378, 392, 394, 398, 0], [392, 396, 399, 404, 0], [395, 398, 418, 420, 1], [412, 419, 424, 427, 1], [418, 425, 451, 453, 1],
  [438, 453, 456, 465, 0], [446, 455, 466, 468, 1], [462, 467, 473, 475, 1], [460, 470, 503, 508, 1], [485, 496, 503, 517, 0],
  [475, 487, 500, 512, 0], [483, 487, 496, 503, 1], [530, 549, 553, 585, 0], [548, 553, 616, 678, 1], [612, 616, 634, 665, 1],
  [615, 634, 641, 648, 1], [620, 641, 653, 695, 1], [628, 638, 653, 656, 0], [580, 590, 638, 657, 0], [545, 548, 590, 606, 0],
  [510, 536, 548, 573, 0], [498, 536, 546, 570, 1], [528, 544, 548, 598, 0], [465, 482, 545, 549, 0], [480, 482, 515, 522, 1],
  [508, 515, 538, 543, 1], [495, 500, 538, 555, 0], [496, 498, 538, 543, 1], [505, 512, 538, 540, 0], [508, 512, 533, 548, 1],
  [520, 528, 532, 545, 0], [525, 530, 560, 608, 1], [554, 560, 571, 584, 1], [550, 557, 572, 584, 0], [468, 496, 557, 568, 0],
  [456, 496, 528, 530, 1], [500, 508, 530, 535, 0], [478, 482, 508, 528, 0], [462, 480, 483, 498, 0],
]
// bars: high, low
const gbpusd = [
  600, 653, 611, 628, 611, 627, 611, 630, 613, 640, 623, 655, 630, 688, 673, 688, 668, 686, 660, 673, 663, 686, 656, 688,
  648, 713, 711, 735, 716, 735, 703, 723, 698, 743, 661, 713, 661, 703, 688, 700, 693, 706, 688, 700, 663, 720, 663, 683,
  633, 673, 638, 658, 648, 660, 628, 658, 618, 638, 598, 638, 623, 653, 633, 648, 643, 653, 643, 658, 618, 663, 549, 632,
  522, 590, 531, 560, 543, 560, 540, 552, 528, 578, 552, 597, 550, 586, 541, 570, 540, 582, 542, 552, 542, 562, 550, 598,
  580, 600, 584, 602, 590, 612, 594, 607, 594, 632, 546, 608, 552, 603, 594, 606, 595, 605, 596, 605, 573, 630, 588, 632,
  622, 692, 678, 705, 678, 696, 690, 708, 682, 713, 702, 770, 723, 765, 722, 740, 724, 738, 712, 728, 682, 730, 653, 705,
  624, 684, 620, 650, 652, 668, 655, 672, 650, 728, 700, 728, 668, 715, 670, 696, 662, 700, 662, 682, 603, 681, 603, 655,
  579, 640, 585, 606, 590, 618, 590, 620, 603, 668, 652, 700, 655, 706, 700, 718, 688, 718, 665, 700, 660, 712, 700, 760,
  705, 752, 718, 738, 715, 742, 712, 744, 688, 758, 700, 772, 760, 875, 786, 905, 790, 863, 780, 808, 765, 872, 822, 885,
  795, 890, 805, 880, 850, 890, 838, 868, 808, 868, 804, 860, 774, 845, 800, 826, 790, 825, 790, 810, 802, 850, 786, 858,
  755, 823, 740, 778, 738, 753, 735, 752, 684, 750, 684, 713, 657, 708, 632, 675, 637, 670, 635, 655, 600, 660, 570, 615,
  542, 606, 540, 608, 480, 525, 458, 530, 375, 563, 430, 530, 432, 505, 440, 494, 456, 545, 505, 557, 510, 582, 520, 578,
  555, 705, 680, 735, 693, 750, 682, 712, 652, 792, 624, 708, 638, 765, 744, 818, 793, 812, 768, 812, 790, 862, 846, 990,
  942, 1170, 1000, 1106, 1050, 1150, 1092, 1140, 1077, 1115,
]
const usdchf = [
  212, 225, 215, 223, 215, 232, 220, 233, 207, 235, 208, 218, 206, 220, 202, 215, 205, 215, 198, 210, 190, 210, 190, 205,
  187, 204, 183, 202, 182, 192, 180, 194, 183, 190, 186, 198, 188, 200, 190, 202, 192, 202, 192, 206, 178, 203, 170, 200,
  174, 188, 176, 184, 174, 185, 172, 185, 173, 182, 168, 184, 170, 181, 168, 180, 172, 182, 165, 182, 172, 185, 175, 188,
  165, 182, 168, 180, 172, 180, 174, 192, 182, 200, 185, 226, 203, 225, 192, 208, 190, 205, 188, 205, 190, 215, 205, 235,
  204, 226, 198, 215, 200, 215, 200, 215, 207, 225, 212, 242, 232, 243, 222, 245, 222, 245, 228, 262, 222, 250, 220, 235,
  218, 240, 224, 245, 242, 262, 248, 272, 258, 298, 258, 303, 268, 305, 292, 305, 285, 308, 300, 355, 305, 335, 290, 315,
  286, 338, 320, 345, 320, 342, 318, 345, 340, 408, 370, 408, 352, 402, 355, 385, 368, 385, 368, 388, 365, 388, 372, 432,
  384, 402, 388, 405, 384, 398, 362, 412, 380, 415, 372, 400, 378, 400, 380, 398, 385, 392, 382, 420, 410, 432, 420, 465,
  448, 484, 462, 490, 472, 492, 475, 530, 528, 575, 526, 590, 530, 550, 575, 630, 590, 695, 605, 683, 585, 640, 592, 665,
  620, 655, 592, 645, 555, 610, 540, 600, 550, 605, 545, 600, 512, 550, 515, 540, 530, 560, 540, 575, 537, 580, 518, 575,
  520, 540, 520, 545, 530, 585, 540, 580, 502, 565, 400, 543, 445, 490, 460, 490, 473, 500, 482, 504,
]
const eurMa = [
  0, 951, 12, 953, 37, 953, 48, 951, 65, 943, 83, 940, 100, 935, 110, 929, 120, 922, 133, 912, 147, 903, 160, 896, 177, 894,
  190, 886, 203, 878, 217, 872, 227, 864, 240, 850, 253, 830, 267, 814, 280, 797, 293, 784, 308, 756, 327, 728, 337, 707,
  345, 683, 357, 667, 370, 648, 383, 630, 392, 620, 403, 598, 417, 579, 427, 572, 433, 569, 442, 562, 453, 563, 470, 565,
  483, 559, 493, 551, 503, 540, 517, 532, 527, 522, 537, 504, 548, 484, 560, 455, 573, 420, 587, 382, 597, 352, 608, 333,
  620, 320, 630, 307, 637, 302, 645, 307, 653, 306, 663, 303, 673, 309, 685, 321, 697, 342, 710, 362, 723, 383, 737, 410,
  750, 430, 760, 438, 765, 444,
]
const gbpMa = [
  165, 610, 175, 630, 183, 653, 196, 678, 209, 693, 232, 691, 250, 666, 263, 655, 268, 650, 276, 632, 293, 602, 306, 587,
  318, 562, 325, 559, 341, 573, 365, 588, 376, 612, 388, 633, 396, 655, 411, 690, 425, 700, 440, 699, 455, 684, 475, 652,
  491, 647, 508, 650, 518, 663, 535, 702, 541, 726, 553, 746, 571, 795, 588, 828, 593, 834, 598, 829, 608, 832, 616, 818,
  621, 812, 628, 792, 635, 775, 646, 738, 660, 690, 673, 632, 683, 585, 691, 554, 701, 531, 705, 529, 718, 552, 730, 585,
  735, 618, 741, 660, 750, 710, 760, 800, 765, 845, 772, 890,
]
const macd = [
  0, 757, 21, 757, 32, 765, 39, 777, 49, 780, 57, 790, 66, 808, 74, 822, 82, 825, 90, 818, 99, 808, 107, 795, 115, 783,
  124, 770, 135, 762, 146, 752, 160, 748, 176, 745, 193, 738, 204, 733, 221, 738, 226, 742, 235, 755, 243, 765, 251, 770,
  260, 765, 271, 762, 287, 755, 299, 750, 321, 744, 337, 752, 354, 750, 371, 752, 387, 752, 404, 760, 415, 765, 423, 778,
  432, 785, 443, 792, 459, 798, 470, 808, 482, 810, 493, 812, 509, 820, 518, 835, 532, 850, 548, 858, 557, 865, 562, 880,
  570, 888, 587, 888, 598, 882, 612, 870, 620, 858, 631, 855, 642, 868, 654, 895, 662, 920, 670, 950, 679, 972, 688, 985,
  695, 965, 704, 940, 712, 905, 723, 868, 734, 835, 748, 820, 751, 805, 756, 780, 762, 773, 767, 765, 773, 756,
]
const macdSignal = [
  0, 760, 21, 756, 35, 755, 46, 765, 57, 775, 71, 795, 88, 812, 104, 818, 121, 800, 138, 778, 154, 762, 176, 745, 193, 738,
  210, 733, 226, 738, 238, 742, 251, 752, 265, 762, 279, 764, 299, 755, 321, 745, 343, 748, 365, 752, 393, 751, 415, 755,
  432, 770, 454, 790, 470, 800, 493, 812, 515, 818, 532, 835, 548, 850, 570, 872, 593, 886, 615, 880, 631, 865, 648, 868,
  665, 895, 679, 935, 695, 965, 709, 965, 726, 910, 745, 845, 770, 795,
]
const cci = [
  750, 766, 768, 777, 788, 808, 802, 830, 855, 877, 871, 908, 922, 983, 955, 908, 895, 910, 898, 913, 913, 897, 877, 877,
  857, 847, 858, 865, 903, 910, 932, 888, 945, 972, 986, 962, 940, 936, 925, 918, 890, 886, 897, 886, 858, 850, 878, 865,
  880, 930, 978, 930, 898, 872, 858, 877, 860, 847, 868, 922, 945, 980, 974, 950, 934, 934, 922, 900, 895, 940, 970, 958,
  928, 917, 897, 868, 835, 818, 808, 820, 770, 773, 790, 781, 797, 793, 812, 818, 885, 918, 905, 782, 777, 803, 760, 735,
]
const longDates = ['29 Jan 2020', '3 Feb 20:00', '7 Feb 12:00', '13 Feb 04:00', '18 Feb 20:00', '24 Feb 12:00', '28 Feb 04:00', '4 Mar 20:00', '10 Mar 12:00']
const shortDates = ['20 Feb 2020', '24 Feb 08:00', '26 Feb 04:00', '28 Feb 00:00', '2 Mar 20:00', '4 Mar 16:00', '6 Mar 12:00', '10 Mar 08:00', '12 Mar 04:00']

/* ---------- chart drawing ---------- */

// samples are kept at three units per pixel, base is the pixel they start from
const scale = (base) => (v) => Math.floor(v / 3) - base
const pairs = (list) => list.flatMap((v, i) => (i % 2 ? [] : [[v, list[i + 1]]]))
const LIME = '#00ff00'
const GRID = '#778899'

function Candles({ data, y, from = 0 }) {
  return data.map(([high, top, bottom, low, filled], i) => {
    const x = 3 + 8 * (from + i)
    const h = Math.max(1, y(bottom) - y(top) + 1)
    return (
      <g key={i} fill={LIME}>
        <rect x={x} y={y(high)} width="1" height={Math.max(1, y(low) - y(high))} />
        <rect x={Math.max(3, x - 2)} y={y(top)} width="5" height={h} />
        {h > 2 && <rect x={Math.max(3, x - 1)} y={y(top) + 1} width="3" height={h - 2} fill={filled ? '#fff' : '#000'} />}
      </g>
    )
  })
}
function Bars({ data, y, from = 0 }) {
  const list = pairs(data)
  let close = null
  let d = ''
  list.forEach(([high, low], i) => {
    const x = 3 + 4 * (from + i)
    const next = list[i + 1]
    const open = close === null ? (high + low) / 2 : Math.min(low - 2, Math.max(high + 2, close))
    const target = next ? (next[0] + next[1]) / 2 : (high + low) / 2
    close = Math.min(low - 3, Math.max(high + 3, target))
    d += `M${x} ${y(high)}h1V${y(low)}h-1zM${x - 1} ${y(open)}h1v1h-1zM${x + 1} ${y(close)}h1v1h-1z`
  })
  return <path d={d} fill={LIME} />
}
const toPath = (points, y) => 'M' + points.map(([px, v]) => `${px + 3} ${y(v)}`).join('L')

function Histogram({ data, y }) {
  const points = pairs(data)
  const out = []
  const zero = y(778)
  for (let x = 0, p = 0; x <= 772; x += 4) {
    while (p < points.length - 2 && points[p + 1][0] < x) p++
    const [x1, v1] = points[p]
    const [x2, v2] = points[p + 1]
    const v = y(v1 + ((v2 - v1) * (x - x1)) / (x2 - x1))
    out.push(`M${x + 3} ${Math.min(zero, v)}h1V${Math.max(zero, v)}h-1z`)
  }
  return <path d={out.join('')} fill="#c0c0c0" />
}

function Plot({ rows, labels, dates, price, priceLabel, split, children }) {
  const columns = Array.from({ length: 17 }, (_, i) => 47.5 + 44 * i)
  return (
    <svg width="842" height="314" viewBox="0 0 842 314" shapeRendering="crispEdges" fontFamily={CHART_FONT} fontSize="11">
      <g stroke={GRID} strokeDasharray="3 3">
        {columns.map((x) => <path key={x} d={`M${x} 3V291`} />)}
        {rows.map((y) => <path key={y} d={`M3 ${y + 0.5}H787`} />)}
      </g>
      <path d={`M3 ${price + 0.5}H787`} stroke={GRID} />
      {children}
      <g stroke="#fff" fill="none">
        <path d={split ? 'M2.500 2.500H787.500V194.500H2.500zM2.500 196.500H787.500V291.500H2.500z' : 'M2.500 2.500H787.500V291.500H2.500z'} />
        {rows.map((y) => <path key={y} d={`M788 ${y + 0.5}h3`} />)}
        {dates.map((d, i) => <path key={d} d={`M${3.5 + 89 * i} 292v3`} />)}
      </g>
      <g fill="#fff">
        {dates.map((d, i) => <text key={d} x={2 + 89 * i} y="306">{d}</text>)}
        {labels.map(([t, y, x = 793]) => <text key={t} x={x} y={y + 5}>{t}</text>)}
      </g>
      {priceLabel && (
        <>
          <rect x="789" y={price - 6} width="48" height="13" fill="#fff" />
          <text x="793" y={price + 5}>{priceLabel}</text>
        </>
      )}
    </svg>
  )
}

const eurY = scale(39)
const gbpY = scale(105)
const lowY = scale(42)
const fullRows = [6, 51, 96, 141, 186, 231, 276]
const halfRows = [44, 89, 134, 179]

const EurChart = () => (
  <Plot
    rows={fullRows}
    labels={['1.15240', '1.14040', '1.12840', '1.11640', '1.10440', '1.09215', '1.08015'].map((t, i) => [t, fullRows[i]])}
    dates={shortDates}
    price={129}
    priceLabel="1.11959"
  >
    <path d="M3 178.500H787" stroke="#32cd32" strokeDasharray="9 6 3 6" />
    <text x="9" y="176" fill="#fff">#55902761 sell 1.00</text>
    <path d={toPath(pairs(eurMa), eurY)} fill="none" stroke="#f00" />
    <Candles data={eurusd} y={eurY} />
  </Plot>
)
const GbpChart = () => (
  <Plot rows={fullRows} labels={[]} dates={longDates} price={258}>
    <path d="M3 85h1v5h-1zM11 98h1v2h-1zM31 98h1v6h-1zM63 18h1v4h-1zM67 17h1v5h-1zM87 98h1v4h-1zM95 98h1v5h-1zM103 98h1v20h-1z" fill={LIME} />
    <Bars data={gbpusd} y={gbpY} from={33} />
    <path d={toPath(pairs(gbpMa), gbpY)} fill="none" stroke="#f00" />
  </Plot>
)
const ChfChart = () => (
  <Plot
    rows={halfRows}
    labels={[['0.97275', 44], ['0.95595', 89], ['0.93880', 134], ['0.92200', 179], ['0.002577', 204, 791], ['0.00', 217, 791], ['-0.009426', 283, 791]]}
    dates={longDates}
    price={121}
    priceLabel="0.94362"
    split
  >
    <path d="M3 217.500H787" stroke="#c0c0c0" strokeDasharray="3 3" />
    <Histogram data={macd} y={lowY} />
    <path d={toPath(pairs(macdSignal), lowY)} fill="none" stroke="#f00" strokeDasharray="3 3" />
    <path d="M3 40h1v3h-1z" fill={LIME} />
    <Bars data={usdchf} y={lowY} from={64} />
    <text x="6" y="211" fill="#fff">MACD(12,26,9) 0.001068 -0.000428</text>
  </Plot>
)
const JpyChart = () => (
  <Plot rows={halfRows} labels={[]} dates={shortDates} price={118} split>
    <path d="M3 214.500H787M3 257.500H787" stroke="#fff" strokeDasharray="3 3" />
    <path d="M3 236.500H787" stroke={GRID} strokeDasharray="3 3" />
    <Candles data={usdjpyHead} y={lowY} />
    <Candles data={usdjpy} y={lowY} from={32} />
    <path d={toPath(cci.map((v, i) => [i * 8, v]), lowY)} fill="none" stroke="#20b2aa" />
    <text x="6" y="211" fill="#fff">CCI(14) 156.5763</text>
  </Plot>
)

const charts = [
  { symbol: 'EURUSD', ohlc: '1.12185 1.12199 1.11898 1.11959', sell: ['1.11', '95', '9'], buy: ['1.11', '97', '0'], tone: 'red', draw: EurChart, expert: true },
  { symbol: 'GBPUSD', ohlc: '1.25547 1.25701 1.25389 1.25583', sell: ['1.25', '58', '3'], buy: ['1.25', '60', '9'], tone: 'red', draw: GbpChart },
  { symbol: 'USDCHF', ohlc: '0.94318 0.94437 0.94218 0.94362', sell: ['0.94', '36', '2'], buy: ['0.94', '38', '6'], tone: 'red', draw: ChfChart },
  { symbol: 'USDJPY', ohlc: '105.584 106.005 105.314 105.596', sell: ['105', '59', '6'], buy: ['105', '61', '3'], tone: 'blue', draw: JpyChart },
]

function Trade({ symbol, sell, buy, tone }) {
  const [volume, setVolume] = useState(1)
  const t = tones[tone]
  const price = ([a, b, c]) => <><span>{a}</span><b>{b}</b><i>{c}</i></>
  return (
    <TradeBox>
      <Side $tone={t}>SELL</Side>
      <Volume>
        <button aria-label="Less" onClick={() => setVolume(Math.max(0.01, volume - 0.01))}>
          <svg width="5" height="3" viewBox="0 0 5 3"><path d="M0 0h5L2.500 3z" /></svg>
        </button>
        <input aria-label={symbol + ' volume'} value={volume.toFixed(2)} readOnly />
        <button aria-label="More" onClick={() => setVolume(volume + 0.01)}>
          <svg width="5" height="3" viewBox="0 0 5 3"><path d="M0 3h5L2.500 0z" /></svg>
        </button>
      </Volume>
      <Side $buy $tone={t}>BUY</Side>
      <Quote $tone={t}>{price(sell)}</Quote>
      <Quote $buy $tone={t}>{price(buy)}</Quote>
    </TradeBox>
  )
}

function Chart({ chart, active }) {
  const Draw = chart.draw
  return (
    <ChartWindow $active={active}>
      <TitleBar $active={active}>
        <Icon name="chartWin" size={16} />
        <h3>{chart.symbol},H4</h3>
        <Caption $active={active} aria-label="Minimize">
          <svg width="13" height="13" viewBox="0 0 13 13"><path d="M.5 7.500h12v4H.5z" fill="#fff" stroke="#5a6172" /></svg>
        </Caption>
        <Caption $active={active} aria-label="Maximize">
          <svg width="13" height="13" viewBox="0 0 13 13">
            <path d="M.5.500h12v12H.5z" fill="#fff" stroke="#5a6172" />
            <path d="M4.500 4.500h4v4h-4z" fill="#b9d1ea" stroke="#5a6172" />
          </svg>
        </Caption>
        <Caption $active={active} $close={active} aria-label="Close">
          <svg width="13" height="12" viewBox="0 0 13 12">
            <path d="M.5.500h4l2 3 2-3h4L9 6l3.500 5.500h-4l-2-3-2 3h-4L4 6z" fill="#fff" stroke="#4d5566" />
          </svg>
        </Caption>
      </TitleBar>
      <Client>
        <Draw />
        <Ohlc>
          <svg width="9" height="5" viewBox="0 0 9 5"><path d="M0 5h9L4.500 0z" fill="#fff" /></svg>
          {chart.symbol},H4  {chart.ohlc}
        </Ohlc>
        {chart.expert && (
          <Expert>
            MACD Sample
            <svg width="15" height="15" viewBox="0 0 15 15" fill="none" stroke="#fff">
              <circle cx="7.500" cy="7.500" r="6.500" />
              <path d="M4 11c2-3 5-3 7 0M4 4.500l2 1.500M11 4.500L9 6M5 6v1M10 6v1" />
            </svg>
          </Expert>
        )}
        <Trade {...chart} />
      </Client>
    </ChartWindow>
  )
}

/* ---------- panels data ---------- */

const tree = [
  {
    icon: 'chartWin', name: 'Axiory MT4', children: [
      { icon: 'accounts', name: 'Accounts', open: true, children: [
        { icon: 'server', name: 'AxioryAsia-01Demo', open: true, children: [{ icon: 'user', name: '11186344: Becka Mais' }] },
      ] },
      { icon: 'func', name: 'Indicators', open: false },
      { icon: 'advisor', name: 'Expert Advisors', open: true, children: [
        { icon: 'advisor', name: 'MACD Sample' },
        { icon: 'advisor', name: 'Moving Average' },
      ] },
      { icon: 'script', name: 'Scripts', open: false },
    ],
  },
]
const quotes = [
  ['EURUSD', '1.11959', '1.11970', false],
  ['USDCHF', '0.94362', '0.94386', false],
  ['GBPUSD', '1.25583', '1.25609', false],
  ['USDJPY', '105.596', '105.613', true],
  ['XAUUSD', '1589.35', '1589.71', true],
]
const articles = [
  ['Library for easy and quick development of MetaTrader programs (part XXIX): Pending trading requests - request object classes', 'Examples, Trading Systems, Statistics and analysis', '2020.03.12'],
  ['Neural Networks Made Easy', 'Examples, Indicators, Statistics and analysis', '2020.03.11'],
  ['Library for easy and quick development of MetaTrader programs (part XXVIII): Closure, removal and modification of pending trading requests', 'Examples, Trading Systems, Statistics and analysis', '2020.02.28'],
]
const toolboxTabs = [
  ['Trade', 61], ['Exposure', 79], ['Account History', 122], ['News', 57], ['Alerts', 58], ['Mailbox', 81, 6], ['Company', 83],
  ['Market', 83, 95], ['Signals', 65], ['Articles', 76, 2], ['Code Base', 88], ['Experts', 68], ['Journal', 69],
]

function Nodes({ items, root }) {
  return (
    <Branch $root={root}>
      {items.map((item) => (
        <Leaf key={item.name} $root={root}>
          {item.open !== undefined && <Expander $open={item.open} aria-label={item.name} aria-expanded={item.open} />}
          <Row><Icon name={item.icon} />{item.name}</Row>
          {item.children && <Nodes items={item.children} />}
        </Leaf>
      ))}
    </Branch>
  )
}

export default function App() {
  const [period, setPeriod] = useState('H4')
  const tool = (name, on) => <ToolButton key={name} $on={on} aria-label={name}><Icon name={name} /></ToolButton>
  const menu = (name) => <ToolButton $wide aria-label={name}><Icon name={name} /><Caret /></ToolButton>

  return (
    <Terminal>
      <GlobalStyle />
      <MenuBar>
        {['File', 'View', 'Insert', 'Charts', 'Tools', 'Window', 'Help'].map((name) => <button key={name}>{name}</button>)}
      </MenuBar>

      <ToolRow>
        <ToolBar>
          <Grip />
          {menu('newChart')}
          {menu('profiles')}
          <Divider />
          {tool('market', true)}
          {tool('cross')}
          {tool('navigator', true)}
          {tool('terminal', true)}
          {tool('tester')}
          <Divider />
          <ToolButton $text><Icon name="order" />New Order</ToolButton>
          {tool('book')}
          {tool('cloud')}
          {tool('radio')}
          <ToolButton $text><Icon name="auto" />AutoTrading</ToolButton>
        </ToolBar>
        <ToolBar>
          <Grip />
          {tool('bars')}
          {tool('candle', true)}
          {tool('line')}
          <Divider />
          {tool('zoomIn')}
          {tool('zoomOut')}
          {tool('tiles')}
          <Divider />
          {tool('scroll', true)}
          {tool('shift')}
          <Divider />
          {menu('indicators')}
          {menu('clock')}
          {menu('template')}
        </ToolBar>
        <Corner>
          <button aria-label="Search"><Icon name="search" /></button>
          <button aria-label="Chat"><Chats /></button>
        </Corner>
      </ToolRow>
      <ToolRow $last>
        <ToolBar $flat>
          <Grip />
          {tool('pointer', true)}
          {tool('crosshair')}
          <Divider />
          {['vline', 'hline', 'trend', 'channel', 'fibo'].map((name) => tool(name))}
          <ToolButton $period><b>A</b></ToolButton>
          {tool('label')}
          {menu('arrows')}
        </ToolBar>
        <ToolBar $flat>
          <Grip />
          {['M1', 'M5', 'M15', 'M30', 'H1', 'H4', 'D1', 'W1', 'MN'].map((p) => (
            <ToolButton key={p} $period $on={p === period} onClick={() => setPeriod(p)}>{p}</ToolButton>
          ))}
        </ToolBar>
      </ToolRow>

      <Main>
        <Dock>
          <Panel>
            <PanelHead><h2>Navigator</h2><button aria-label="Close"><Cross /></button></PanelHead>
            <PanelBody><Nodes items={tree} root /></PanelBody>
            <TabStrip>
              <Tab $on>Common</Tab>
              <Tab>Favorites</Tab>
            </TabStrip>
          </Panel>
          <Panel $grow>
            <PanelHead><h2>Market Watch: 09:27:33</h2><button aria-label="Close"><Cross /></button></PanelHead>
            <PanelBody>
              <QuoteTable>
                <thead><tr><th>Symbol</th><th>Bid</th><th>Ask</th></tr></thead>
                <tbody>
                  {quotes.map(([name, bid, ask, up]) => (
                    <QuoteRow key={name} $up={up} $selected={name === 'XAUUSD'}>
                      <td><Cell><Direction up={up} />{name}</Cell></td>
                      <td>{bid}</td>
                      <td>{ask}</td>
                    </QuoteRow>
                  ))}
                </tbody>
              </QuoteTable>
            </PanelBody>
            <TabStrip>
              <Tab $on>Symbols</Tab>
              <Tab>Tick Chart</Tab>
            </TabStrip>
          </Panel>
        </Dock>

        <Workspace>
          <Desktop>
            {charts.map((chart, i) => <Chart key={chart.symbol} chart={chart} active={i === 0} />)}
          </Desktop>
          <DeskTabs $h={25}>
            <Tab $on $w={100}>EURUSD,H4</Tab>
            <Tab $w={101}>USDCHF,H4</Tab>
            <Tab $w={100}>GBPUSD,H4</Tab>
            <Tab $w={96}>USDJPY,H4</Tab>
            <Arrows>
              <svg width="5" height="8" viewBox="0 0 5 8"><path d="M5 0v8L0 4z" fill="#999" /></svg>
              <svg width="5" height="8" viewBox="0 0 5 8"><path d="M0 0v8l5-4z" fill="#999" /></svg>
            </Arrows>
          </DeskTabs>
        </Workspace>
      </Main>

      <Toolbox>
        <Spine><button aria-label="Close"><Cross /></button><h2>Terminal</h2></Spine>
        <ToolboxBody>
          <ListArea>
            <Articles>
              <thead>
                <tr>
                  <th>Name</th>
                  <th>Category</th>
                  <th>
                    Date
                    <SortMark width="6" height="8" viewBox="0 0 6 8"><path d="M0 .5h6M.5 1L3 7.500" stroke="#777" fill="none" /></SortMark>
                  </th>
                </tr>
              </thead>
              <tbody>
                {articles.map(([name, category, date]) => (
                  <tr key={name}>
                    <td><Cell $gap={10}><Page />{name}</Cell></td>
                    <td>{category}</td>
                    <td>{date}</td>
                  </tr>
                ))}
                <tr><td /><td /><td /></tr>
              </tbody>
            </Articles>
            <ScrollBar>
              <svg width="8" height="6" viewBox="0 0 8 6"><path d="M0 5l4-4 4 4" stroke="#505050" strokeWidth="2" fill="none" /></svg>
              <Thumb />
              <svg width="8" height="6" viewBox="0 0 8 6"><path d="M0 1l4 4 4-4" stroke="#505050" strokeWidth="2" fill="none" /></svg>
            </ScrollBar>
          </ListArea>
          <TabStrip $h={25} $indent={2}>
            {toolboxTabs.map(([name, w, badge]) => (
              <Tab key={name} $w={w} $on={name === 'Articles'}>
                {name}{badge && <sup>{badge}</sup>}
              </Tab>
            ))}
          </TabStrip>
        </ToolboxBody>
      </Toolbox>

      <StatusBar>
        <StatusCell>For Help, press F1</StatusCell>
        <StatusCell $w={138}>Default</StatusCell>
        <StatusCell $w={129} />
        <StatusCell $w={89} />
        <StatusCell $w={88} />
        <StatusCell $w={85} />
        <StatusCell $w={87} />
        <StatusCell $w={84} />
        <StatusCell $w={152}><Traffic />33/1 kb</StatusCell>
      </StatusBar>
    </Terminal>
  )
}
